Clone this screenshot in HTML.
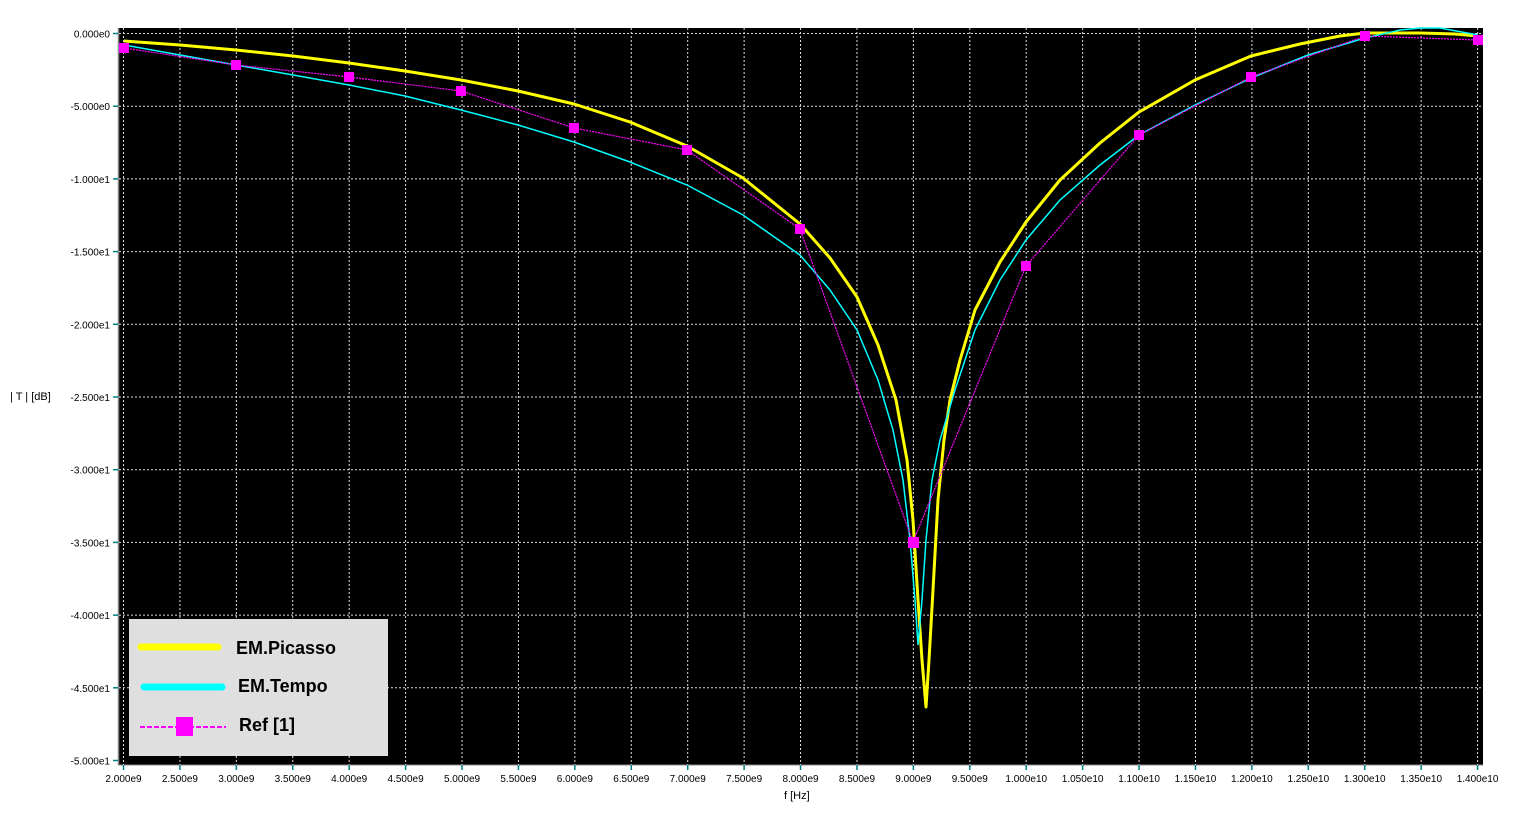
<!DOCTYPE html>
<html><head><style>
body{margin:0;background:#fff;width:1517px;height:815px;overflow:hidden;font-family:"Liberation Sans",Arial,sans-serif}
svg{position:absolute;left:0;top:0}
</style></head><body>
<svg width="1517" height="815" xmlns="http://www.w3.org/2000/svg" font-family="Liberation Sans, Arial, sans-serif">
<rect x="118" y="28" width="1365" height="737" fill="#000"/>
<line x1="118.5" y1="28" x2="118.5" y2="765" stroke="#888" stroke-width="1.5"/>
<line x1="118" y1="765" x2="1483" y2="765" stroke="#888" stroke-width="1"/>
<g stroke="#ddd" stroke-width="1" stroke-dasharray="2,2" id="grid"></g>
<g id="labels" font-size="10" fill="#000"></g>
<text x="10" y="400" font-size="11">| T | [dB]</text>
<text x="784" y="799" font-size="11">f [Hz]</text>
<polyline fill="none" stroke="#c0c0c0" stroke-width="0.7" stroke-dasharray="1,2" points="124,48 236,65 349,77 461,91 574,128 687,150 800,229 913,542 1026,266"/>
<polyline fill="none" stroke="#ffff00" stroke-width="3" stroke-linejoin="round" points="124,41 180,45 236,50 293,56 349,63 405,71 461,80 518,91 574,104 630,122 687,146 743,178 800,224 830,258 857,297 878,345 896,400 907,460 913,520 918,600 922,660 926,707 929,660 933,590 938,500 944,440 950,400 960,360 975,310 1000,262 1026,222 1060,180 1100,143 1139,112 1195,80 1251,56 1300,44 1340,36 1365,33 1420,33 1455,34 1478,36"/>
<polyline fill="none" stroke="#00ffff" stroke-width="1.5" points="124,45 180,55 236,65 293,75 349,85 405,96 461,110 518,125 574,142 630,162 687,185 743,215 800,255 830,290 857,330 878,380 893,430 903,480 910,540 915,600 918,645 922,600 926,540 932,480 940,440 955,390 975,330 1000,280 1026,240 1060,200 1100,165 1139,135 1195,105 1251,78 1308,55 1365,38 1400,30 1420,28 1440,28 1478,35"/>
<polyline fill="none" stroke="#ff00ff" stroke-width="1.2" stroke-dasharray="2,1" points="124,48 236,65 349,77 461,91 574,128 687,150 800,229 913,542 1026,266 1139,135 1251,77 1365,36 1478,40"/>
<g fill="#ff00ff">
<rect x="119" y="43" width="10" height="10"/><rect x="231" y="60" width="10" height="10"/><rect x="344" y="72" width="10" height="10"/><rect x="456" y="86" width="10" height="10"/><rect x="569" y="123" width="10" height="10"/><rect x="682" y="145" width="10" height="10"/><rect x="795" y="224" width="10" height="10"/><rect x="908" y="537" width="11" height="11"/><rect x="1021" y="261" width="10" height="10"/><rect x="1134" y="130" width="10" height="10"/><rect x="1246" y="72" width="10" height="10"/><rect x="1360" y="31" width="10" height="10"/><rect x="1473" y="35" width="10" height="10"/>
</g>
<rect x="129" y="619" width="259" height="137" fill="#dfdfdf"/>
<line x1="141" y1="647" x2="218" y2="647" stroke="#ffff00" stroke-width="7" stroke-linecap="round"/>
<line x1="144" y1="687" x2="222" y2="687" stroke="#00ffff" stroke-width="7" stroke-linecap="round"/>
<line x1="140" y1="727" x2="226" y2="727" stroke="#ff00ff" stroke-width="2" stroke-dasharray="5,2"/>
<rect x="176" y="717" width="17" height="19" fill="#ff00ff"/>
<g font-size="18" font-weight="bold" fill="#000">
<text x="236" y="654">EM.Picasso</text>
<text x="238" y="692">EM.Tempo</text>
<text x="239" y="731">Ref [1]</text>
</g>
</svg>
<script>
var g=document.getElementById('grid'),L=document.getElementById('labels'),ns='http://www.w3.org/2000/svg';
function el(t,a,p){var e=document.createElementNS(ns,t);for(var k in a)e.setAttribute(k,a[k]);p.appendChild(e);return e;}
var ylab=['0.000e0','-5.000e0','-1.000e1','-1.500e1','-2.000e1','-2.500e1','-3.000e1','-3.500e1','-4.000e1','-4.500e1','-5.000e1'];
for(var i=0;i<=10;i++){var y=33.5+i*72.7;
 if(i<10)el('line',{x1:119,y1:y,x2:1483,y2:y},g);
 el('line',{x1:113,y1:y,x2:118,y2:y,stroke:'#008080','stroke-width':1.5},L.parentNode);
 var t=el('text',{x:110,y:y+4,'text-anchor':'end'},L);t.textContent=ylab[i];}
var xl=['2.000e9','2.500e9','3.000e9','3.500e9','4.000e9','4.500e9','5.000e9','5.500e9','6.000e9','6.500e9','7.000e9','7.500e9','8.000e9','8.500e9','9.000e9','9.500e9','1.000e10','1.050e10','1.100e10','1.150e10','1.200e10','1.250e10','1.300e10','1.350e10','1.400e10'];
for(var j=0;j<25;j++){var x=123.5+j*56.42;
 el('line',{x1:x,y1:28,x2:x,y2:765},g);
 el('line',{x1:x,y1:765,x2:x,y2:770,stroke:'#008080','stroke-width':1.5},L.parentNode);
 var t=el('text',{x:x,y:782,'text-anchor':'middle'},L);t.textContent=xl[j];}
</script>
</body></html>
